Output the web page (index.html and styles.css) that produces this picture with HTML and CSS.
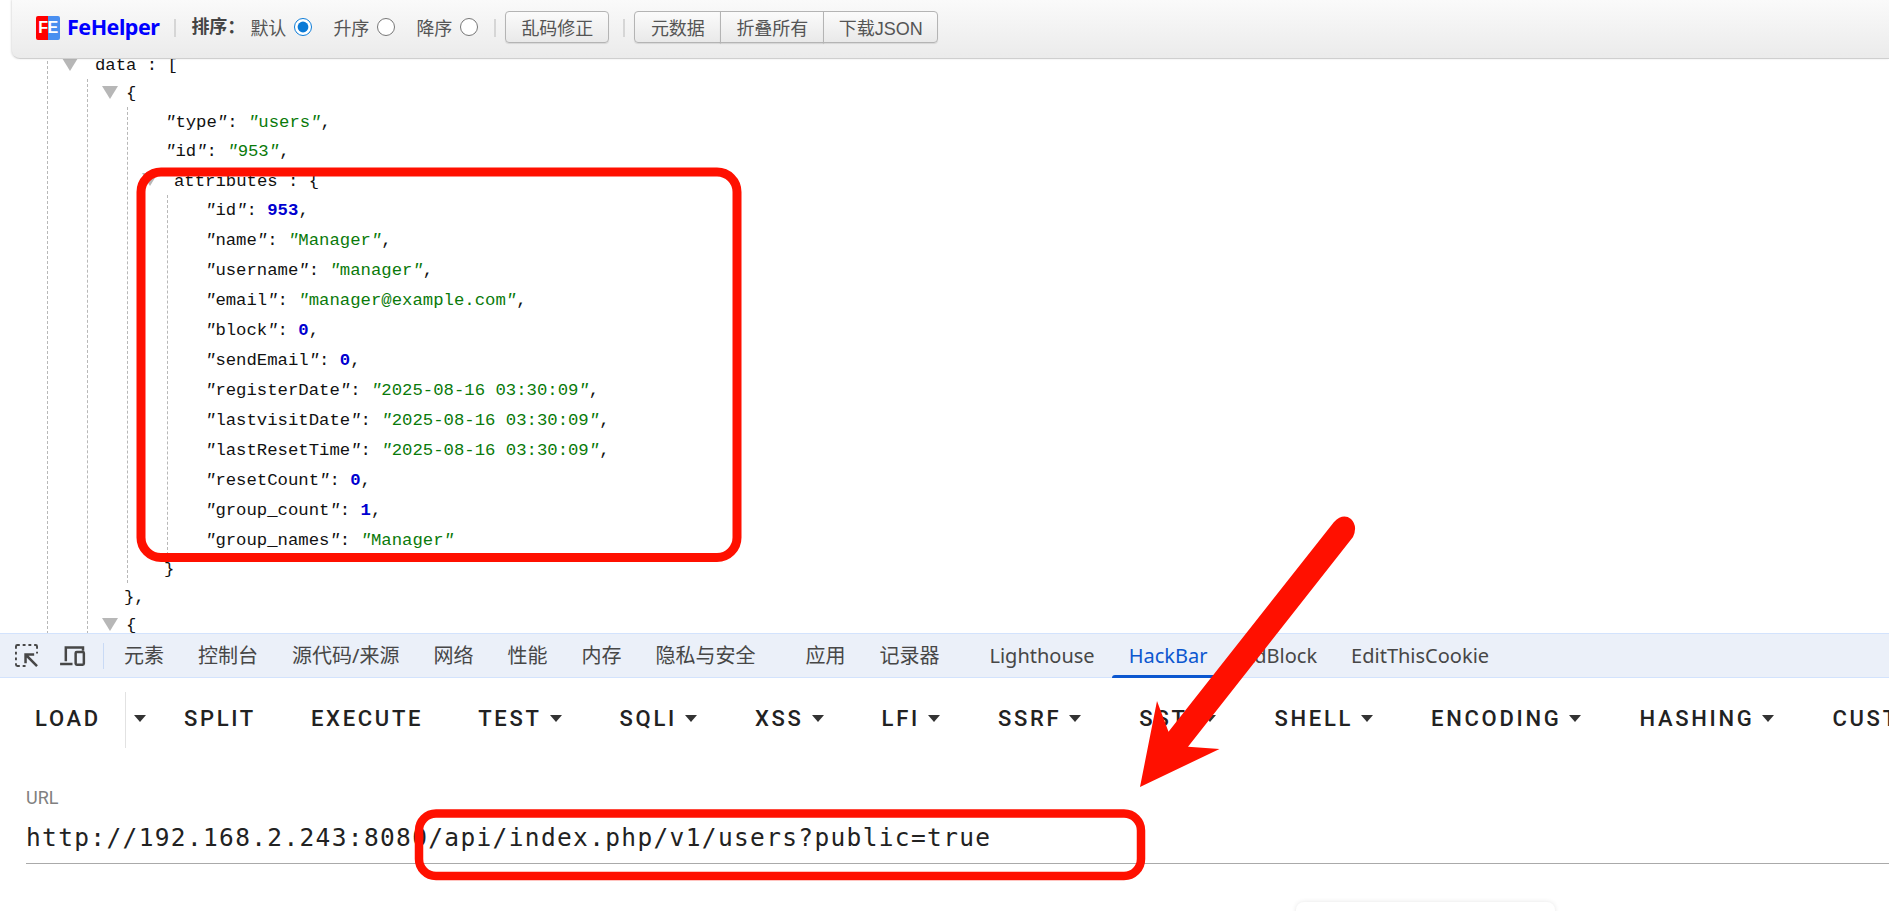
FILE: index.html
```html
<!DOCTYPE html>
<html lang="zh">
<head>
<meta charset="utf-8">
<title>FeHelper HackBar</title>
<link rel="stylesheet" href="styles.css">
</head>
<body>
<div class="page">
  <header class="fe-bar">
    <div class="fe-logo">FE</div>
    <span class="fe-name">FeHelper</span>
    <span class="fe-sep sep-a"></span>
    <b class="fe-sort">排序：</b>
    <label class="fe-opt opt-a">默认<input type="radio" name="sort" checked></label>
    <label class="fe-opt">升序<input type="radio" name="sort"></label>
    <label class="fe-opt">降序<input type="radio" name="sort"></label>
    <span class="fe-sep sep-b"></span>
    <button class="fe-btn solo">乱码修正</button>
    <span class="fe-sep sep-c"></span>
    <div class="fe-group">
      <button class="fe-btn w-a">元数据</button>
      <button class="fe-btn w-b">折叠所有</button>
      <button class="fe-btn w-c">下载JSON</button>
    </div>
  </header>

  <main class="json">
    <div class="lvl l0">
      <div class="row h28 p-data tri">data : [</div>
      <div class="lvl l1">
        <div class="row h28 p-brace tri">{</div>
        <div class="lvl l2">
          <div class="row h29 p-key"><i>"</i>type<i>"</i>: <span class="s"><i>"</i>users<i>"</i></span>,</div>
          <div class="row p-key"><i>"</i>id<i>"</i>: <span class="s"><i>"</i>953<i>"</i></span>,</div>
          <div class="row h29 p-attr tri">attributes : {</div>
          <div class="lvl l3">
            <div class="row p-key"><i>"</i>id<i>"</i>: <span class="n">953</span>,</div>
            <div class="row p-key"><i>"</i>name<i>"</i>: <span class="s"><i>"</i>Manager<i>"</i></span>,</div>
            <div class="row p-key"><i>"</i>username<i>"</i>: <span class="s"><i>"</i>manager<i>"</i></span>,</div>
            <div class="row p-key"><i>"</i>email<i>"</i>: <span class="s"><i>"</i>manager@example.com<i>"</i></span>,</div>
            <div class="row p-key"><i>"</i>block<i>"</i>: <span class="n">0</span>,</div>
            <div class="row p-key"><i>"</i>sendEmail<i>"</i>: <span class="n">0</span>,</div>
            <div class="row p-key"><i>"</i>registerDate<i>"</i>: <span class="s"><i>"</i>2025-08-16 03:30:09<i>"</i></span>,</div>
            <div class="row p-key"><i>"</i>lastvisitDate<i>"</i>: <span class="s"><i>"</i>2025-08-16 03:30:09<i>"</i></span>,</div>
            <div class="row p-key"><i>"</i>lastResetTime<i>"</i>: <span class="s"><i>"</i>2025-08-16 03:30:09<i>"</i></span>,</div>
            <div class="row p-key"><i>"</i>resetCount<i>"</i>: <span class="n">0</span>,</div>
            <div class="row p-key"><i>"</i>group_count<i>"</i>: <span class="n">1</span>,</div>
            <div class="row p-key"><i>"</i>group_names<i>"</i>: <span class="s"><i>"</i>Manager<i>"</i></span></div>
          </div>
          <div class="row h28 p-close">}</div>
        </div>
        <div class="row h28 p-close">},</div>
        <div class="row h28 p-brace tri">{</div>
      </div>
    </div>
  </main>

  <nav class="tabs">
    <svg class="ico-inspect" viewBox="0 0 24 24" aria-hidden="true"><path d="M1 5V2.500A1.500 1.500 0 0 1 2.500 1H5M8 1h3M14 1h3M20 1h1.500A1.500 1.500 0 0 1 23 2.500V5M23 8v2M1 8v3M1 14v3M1 20v1.500A1.500 1.500 0 0 0 2.500 23H5M8 23h3" fill="none" stroke="#474747" stroke-width="2"/><path d="M23 23 12 12M11 20v-9h9" fill="none" stroke="#474747" stroke-width="2.600"/></svg>
    <svg class="ico-device" viewBox="0 0 28 22" aria-hidden="true"><path d="M7 17V2.500h18V6M1 19.800h13" fill="none" stroke="#474747" stroke-width="2.600"/><rect x="17.300" y="7.300" width="8.600" height="13.400" rx="1.200" fill="none" stroke="#474747" stroke-width="2.600"/></svg>
    <span class="tab-sep"></span>
    <a class="tab">元素</a>
    <a class="tab">控制台</a>
    <a class="tab">源代码/来源</a>
    <a class="tab">网络</a>
    <a class="tab">性能</a>
    <a class="tab">内存</a>
    <a class="tab">隐私与安全</a>
    <a class="tab gap-l">应用</a>
    <a class="tab">记录器</a>
    <a class="tab gap-l">Lighthouse</a>
    <a class="tab active">HackBar</a>
    <a class="tab">AdBlock</a>
    <a class="tab">EditThisCookie</a>
  </nav>

  <section class="hackbar">
    <div class="actions">
      <span class="act load">LOAD</span>
      <span class="load-more"><em class="caret"></em></span>
      <span class="act">SPLIT</span>
      <span class="act">EXECUTE</span>
      <span class="act dd">TEST<em class="caret"></em></span>
      <span class="act dd">SQLI<em class="caret"></em></span>
      <span class="act dd">XSS<em class="caret"></em></span>
      <span class="act dd">LFI<em class="caret"></em></span>
      <span class="act dd">SSRF<em class="caret"></em></span>
      <span class="act dd">SSTI<em class="caret"></em></span>
      <span class="act dd">SHELL<em class="caret"></em></span>
      <span class="act dd">ENCODING<em class="caret"></em></span>
      <span class="act dd">HASHING<em class="caret"></em></span>
      <span class="act dd">CUSTOM<em class="caret"></em></span>
    </div>
    <div class="field">
      <div class="field-label">URL</div>
      <div class="field-value">http://192.168.2.243:8080/api/index.php/v1/users?public=true</div>
    </div>
  </section>

  <div class="peek"></div>

  <svg class="marks" viewBox="0 0 1889 911" aria-hidden="true">
    <rect x="141" y="172" width="596" height="385.500" rx="20" fill="none" stroke="#ff1000" stroke-width="9"/>
    <rect x="419" y="813.500" width="722" height="62.500" rx="17" fill="none" stroke="#ff1000" stroke-width="8.500"/>
    <path d="M1168.500 731.700 1334 522Q1343 513 1351 519 1358 526 1353 537L1188 746.700 1219.500 749 1140 787 1157 701Z" fill="#ff1000"/>
  </svg>
</div>
</body>
</html>
```

FILE: styles.css
```css
* { box-sizing: border-box; }
html, body { margin: 0; height: 100%; background: #fff; }
.page {
  position: relative;
  width: 1889px;
  height: 911px;
  overflow: hidden;
  display: flex;
  flex-direction: column;
  font-family: "Noto Sans", "Noto Sans CJK SC", sans-serif;
}

/* FeHelper toolbar, floats above the JSON */
.fe-bar {
  position: absolute;
  z-index: 2;
  top: 0;
  left: 12px;
  right: 0;
  height: 59px;
  padding: 11px 0 0 24px;
  display: flex;
  align-items: flex-start;
  background: linear-gradient(#fafafa, #ebebeb);
  border-bottom: 1px solid #cfcfcf;
  border-bottom-left-radius: 8px;
  box-shadow: -1px 0 2px rgba(0,0,0,.12);
  font-family: "Liberation Sans", "Noto Sans CJK SC", sans-serif;
  font-size: 18px;
  color: #555;
}
.fe-logo {
  width: 24px;
  height: 24px;
  margin-top: 5px;
  border-radius: 2px;
  background: linear-gradient(90deg, #f00 50%, #4a8ff0 50%);
  color: #fff;
  font: bold 16px/24px "Liberation Sans", sans-serif;
  text-align: center;
  letter-spacing: -.5px;
}
.fe-name {
  margin-left: 7px;
  font: bold 21.500px/32px "Noto Sans", sans-serif;
  letter-spacing: -.5px;
  color: #00f;
}
.fe-sep { width: 2px; height: 18px; margin-top: 8px; background: #d6d6d6; }
.sep-a { margin-left: 15px; }
.sep-b { margin-left: 16px; }
.sep-c { margin-left: 14px; }
.fe-sort { margin-left: 15px; line-height: 32px; color: #444; }
.fe-opt { display: flex; align-items: center; height: 32px; margin-left: 21px; }
.opt-a { margin-left: 5px; }
.fe-opt input { width: 18px; height: 18px; margin: 0 0 0 8px; accent-color: #0a7ad6; }
.fe-btn {
  height: 32px;
  padding: 0;
  border: 1px solid #b4b4b4;
  border-radius: 4px;
  background: linear-gradient(#fbfbfb, #e9e9e9);
  font: inherit;
  color: #555;
  box-shadow: 0 1px 1px rgba(0,0,0,.1);
}
.solo { width: 104px; margin-left: 9px; }
.fe-group { display: flex; margin-left: 9px; }
.fe-group .fe-btn { border-radius: 0; margin-left: -1px; }
.fe-group .fe-btn:first-child { margin-left: 0; border-radius: 4px 0 0 4px; }
.fe-group .fe-btn:last-child { border-radius: 0 4px 4px 0; }
.w-a { width: 87px; }
.w-b { width: 104px; }
.w-c { width: 115px; }

/* JSON tree */
.json {
  flex: none;
  height: 633px;
  overflow: hidden;
  padding: 51px 0 0 47px;
  font-family: "Liberation Mono", monospace;
  font-size: 17.300px;
  color: #111;
}
.lvl { border-left: 1px dashed #b8b8b8; }
.l1, .l2, .l3 { margin-left: 39px; }
.row { position: relative; height: 30px; line-height: 32px; white-space: pre; }
.h28 { height: 28px; line-height: 30px; }
.h29 { height: 29px; line-height: 31px; }
.row i { font-style: italic; }
.p-data { padding-left: 47px; }
.p-brace { padding-left: 38px; }
.p-key { padding-left: 37px; }
.p-close { padding-left: 36px; }
.p-attr { padding-left: 46px; }
.tri::before {
  content: "";
  position: absolute;
  top: 7px;
  left: 14px;
  width: 16px;
  height: 13px;
  background: #b7b7b7;
  clip-path: polygon(0 0, 100% 0, 50% 100%);
}
.s { color: #0a7a0a; }
.n { color: #0000d0; font-weight: bold; }

/* DevTools tab strip */
.tabs {
  flex: none;
  height: 45px;
  display: flex;
  align-items: stretch;
  padding-left: 15px;
  background: #ebf0f9;
  border-top: 1px solid #d3e3fd;
  border-bottom: 1px solid #d3e3fd;
  font-size: 20px;
  color: #474747;
}
.ico-inspect { width: 23px; height: 23px; margin-top: 10px; }
.ico-device { width: 27px; height: 21px; margin: 11px 0 0 21px; }
.tab-sep { width: 1px; height: 26px; margin: 9px 3px 0 17px; background: #c9daf5; }
.tab { position: relative; padding: 0 17px; line-height: 43px; white-space: nowrap; }
.gap-l { margin-left: 16px; }
.active { color: #0b57d0; }
.active::after {
  content: "";
  position: absolute;
  left: 0;
  right: 0;
  bottom: -1px;
  height: 3px;
  border-radius: 3px 3px 0 0;
  background: #0b57d0;
}

/* HackBar */
.hackbar { flex: 1; background: #fff; }
.actions {
  display: flex;
  align-items: center;
  height: 56px;
  margin-top: 14px;
  padding-left: 35px;
  font-family: Roboto, sans-serif;
  font-size: 22px;
  font-weight: 500;
  letter-spacing: 2.700px;
  color: #222;
  white-space: nowrap;
}
.act { margin-right: 55px; padding-bottom: 4px; display: flex; align-items: center; }
.dd { margin-right: 58px; }
.load { margin-right: 24px; }
.load-more {
  display: flex;
  align-items: center;
  height: 56px;
  padding: 0 38px 4px 8px;
  border-left: 1px solid #e2e2e2;
}
.caret {
  width: 0;
  height: 0;
  margin-left: 8px;
  border-left: 6.500px solid transparent;
  border-right: 6.500px solid transparent;
  border-top: 7px solid #333;
}
.load-more .caret { margin-left: 0; }
.field { margin: 38px 0 0 26px; border-bottom: 1px solid #aaa; height: 78px; }
.field-label { font: 18px/24px Roboto, sans-serif; color: #808080; }
.field-value {
  margin-top: 13px;
  font: 24.500px/30px "DejaVu Sans Mono", monospace;
  letter-spacing: 1.340px;
  color: #222;
}

/* overlays */
.peek {
  position: absolute;
  left: 1296px;
  top: 902px;
  width: 259px;
  height: 30px;
  border-radius: 8px;
  background: #fff;
  box-shadow: 0 0 5px rgba(0,0,0,.1);
}
.marks { position: absolute; z-index: 3; inset: 0; width: 1889px; height: 911px; }
```
